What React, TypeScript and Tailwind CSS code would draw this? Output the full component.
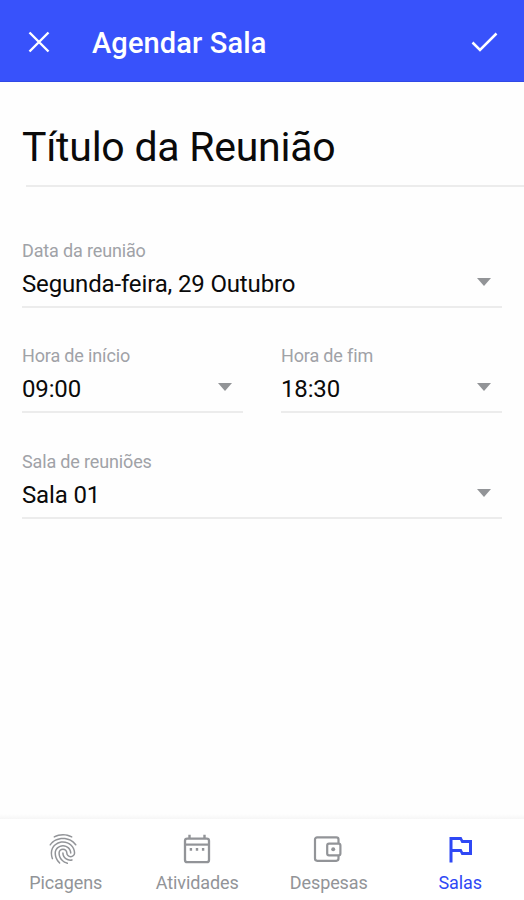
import { MdFingerprint, MdOutlinedFlag } from 'react-icons/md';

function CalendarIcon() {
  return (
    <svg viewBox="0 0 36 36" className="w-9 h-9" fill="none" stroke="currentColor">
      <rect x="6" y="7.6" width="24" height="23.6" rx="2.2" strokeWidth="2.3" />
      <path d="M6 13.6h24" strokeWidth="2.2" />
      <path d="M10.5 3.8v4M25.5 3.8v4" strokeWidth="2.4" />
      <path d="M10.7 18.4h2.4M16.8 18.4h2.4M22.9 18.4h2.4" strokeWidth="2.8" />
    </svg>
  );
}

function WalletIcon() {
  return (
    <svg viewBox="0 0 36 36" className="w-9 h-9" fill="none" stroke="currentColor" strokeWidth="2.2">
      <path d="M29.5 12.2V8.6a2.2 2.2 0 0 0-2.2-2.2H8.2A2.2 2.2 0 0 0 6 8.6v19a2.2 2.2 0 0 0 2.2 2.2h19.1a2.2 2.2 0 0 0 2.2-2.2V24.6" />
      <rect x="18.2" y="12.6" width="13.2" height="11.8" rx="1.8" />
      <circle cx="24.2" cy="18.3" r="2" fill="currentColor" stroke="none" />
    </svg>
  );
}

function Field({ label, value }: { label: string; value: string }) {
  return (
    <div className="flex-1 h-[68px] border-b-2 border-[#ececec]">
      <div className="text-[18px] leading-[22px] tracking-[-0.15px] text-[#a0a2a7]">{label}</div>
      <div className="mt-[6px] flex items-center justify-between pr-[10px]">
        <span className="text-[24px] leading-[32px] tracking-[-0.15px] text-[#0a0a0a]">{value}</span>
        <svg viewBox="0 0 14 8" className="w-[14px] h-2 mb-[4px] mr-px fill-[#929497]">
          <path d="M0 0h14L7 8z" />
        </svg>
      </div>
    </div>
  );
}

export default function App() {
  const tabs = [
    { label: 'Picagens', icon: <MdFingerprint size={36} />, shift: 'pr-[5px]' },
    { label: 'Atividades', icon: <CalendarIcon />, shift: 'pr-px' },
    { label: 'Despesas', icon: <WalletIcon />, shift: 'pr-[4px]' },
    { label: 'Salas', icon: <MdOutlinedFlag size={36} />, shift: '', active: true },
  ];

  return (
    <div className="w-full h-screen bg-[#fefefe] flex flex-col overflow-hidden font-['Roboto',sans-serif]">
      <header className="h-[82px] shrink-0 bg-[#3852fb] border-b border-[#3049e6] text-white flex items-center pl-[28px] pr-[26px]">
        <svg viewBox="0 0 22 22" className="w-[22px] h-[22px] mt-[2px]" fill="none" stroke="currentColor" strokeWidth="2.4">
          <path d="M1.5 1.5l19 19M20.5 1.5l-19 19" />
        </svg>
        <h1 className="ml-[42px] mt-[4px] text-[29px] leading-[36px] tracking-[0.12px] font-medium">Agendar Sala</h1>
        <svg viewBox="0 0 27 20" className="ml-auto mt-[2px] w-[27px] h-5" fill="none" stroke="currentColor" strokeWidth="2.5">
          <path d="M1.5 10.5l7.5 7.5L25.5 1.5" />
        </svg>
      </header>

      <main className="flex-1">
        <h2 className="mt-[40px] pl-[22px] text-[41px] leading-[50px] tracking-[-0.25px] text-[#0a0a0a]">Título da Reunião</h2>
        <div className="mt-[13px] ml-[26px] h-[2px] bg-[#ececec]" />

        <div className="mt-[53px] px-[22px] flex flex-col gap-[37px]">
          <div className="flex">
            <Field label="Data da reunião" value="Segunda-feira, 29 Outubro" />
          </div>
          <div className="flex gap-[38px]">
            <Field label="Hora de início" value="09:00" />
            <Field label="Hora de fim" value="18:30" />
          </div>
          <div className="flex pt-px">
            <Field label="Sala de reuniões" value="Sala 01" />
          </div>
        </div>
      </main>

      <div className="h-[5px] shrink-0 bg-linear-to-b from-[#fefefe] to-[#f6f6f6]" />
      <nav className="h-[81px] shrink-0 bg-white flex pt-[12px] -mr-[2px]">
        {tabs.map((tab) => (
          <button
            key={tab.label}
            className={`flex-1 flex flex-col items-center ${tab.active ? 'text-[#2f48f5]' : 'text-[#929498]'}`}
          >
            <span className={tab.shift}>{tab.icon}</span>
            <span className="mt-[5px] text-[18px] leading-[22px] tracking-[-0.1px]">{tab.label}</span>
          </button>
        ))}
      </nav>
    </div>
  );
}
